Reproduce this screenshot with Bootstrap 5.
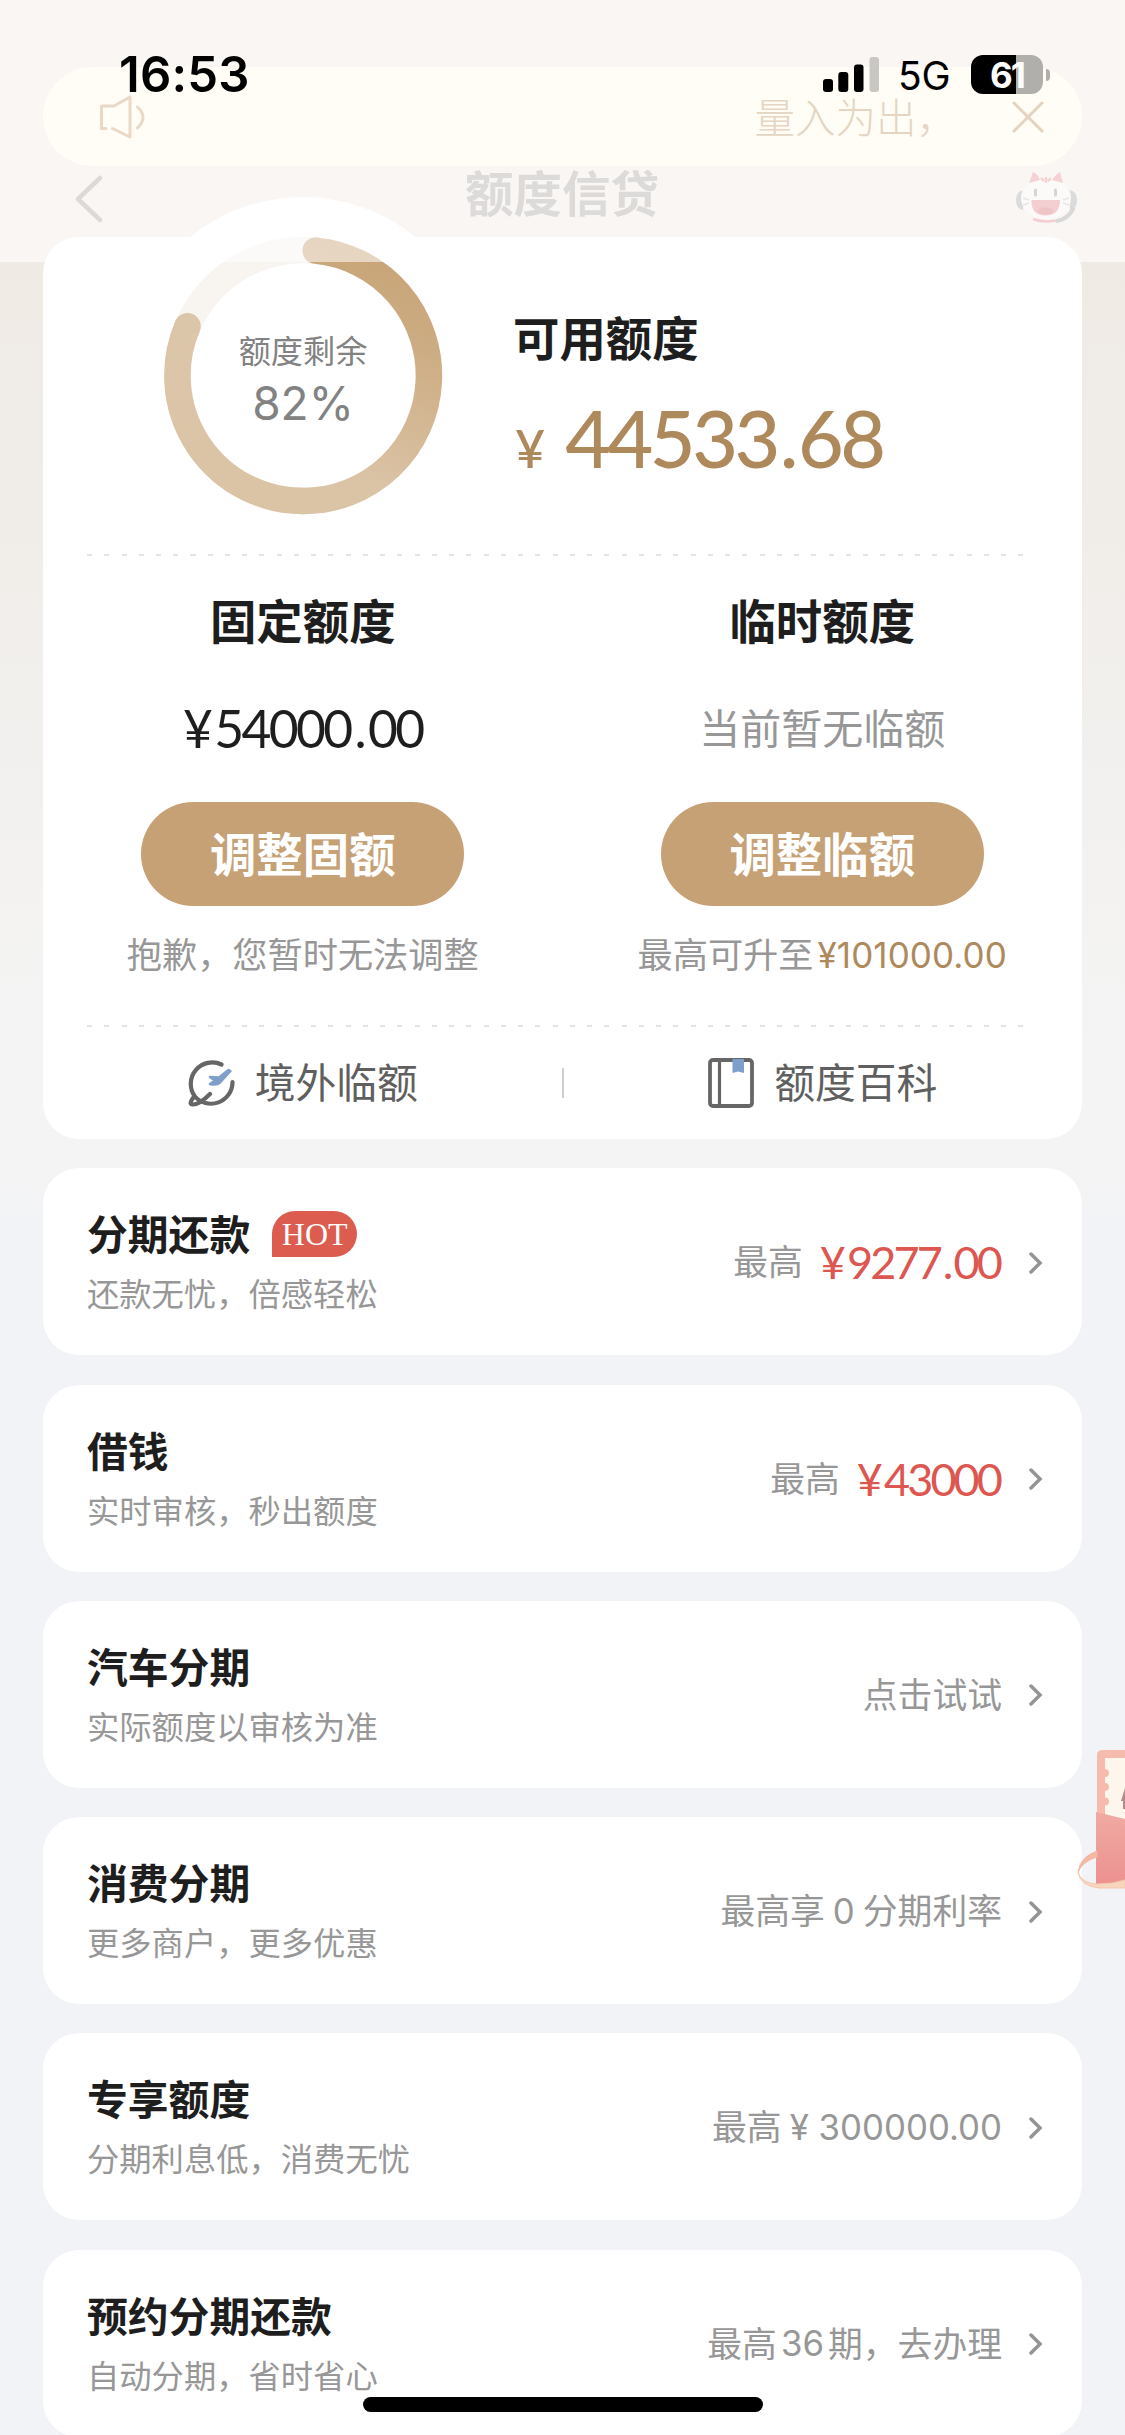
<!DOCTYPE html>
<html lang="zh-CN">
<head>
<meta charset="utf-8">
<meta name="viewport" content="width=device-width, initial-scale=1">
<title>额度信贷</title>
<link href="https://cdn.jsdelivr.net/npm/bootstrap@5.3.0/dist/css/bootstrap.min.css" rel="stylesheet">
<style>
body{font-family:"Noto Sans CJK SC",sans-serif;background:#f2f3f6;color:#1e1e1e}
.phone{width:1125px;height:2435px;padding:0 43px;background:linear-gradient(#f4ece6 0 262px,#efeae4 262px,#f4f4f4 1050px,#f4f4f4 1168px,#f2f3f6 1220px)}
.statusbar{height:104px;left:0;right:0;top:0;color:#000;z-index:5;font-family:Inter,"Liberation Sans",sans-serif}
.clock{font-size:49px;font-weight:600;line-height:60px;left:119px;top:45px;letter-spacing:.2px}
.signals{left:823px;top:55px;height:39px}
.net{font-size:39px;line-height:39px;margin-left:18px;width:55px;margin-right:18px;letter-spacing:-.2px;padding-top:2px}
.battery{width:72px;height:39px;border-radius:12px;background:linear-gradient(90deg,#000 45px,#b0afab 45px);color:#fff;font-weight:700;font-size:35px;line-height:40px;letter-spacing:-2px}
.battip{width:4px;height:12px;border-radius:0 4px 4px 0;background:#b0afab;margin-left:3px}
.notice{margin-top:67px;height:99px;border-radius:50px;background:#fffdf6;color:#e6d5c3;font-size:40.5px;font-weight:300;padding:0 38px 0 57px;z-index:3}
.notice-text{line-height:40px;margin-left:auto;margin-right:55px;margin-top:-1px}
.titlebar{height:71px;padding:5px 5px 0 32px;z-index:3}
.titlebar h1{font-size:48.5px;line-height:50px;font-weight:700;color:#dcdbda;padding-left:5px;margin:-5px 0 0}
.panel{background:#fff;border-radius:36px;margin-bottom:29.3px}
.haze{left:0;right:0;top:0;height:262px;background:rgba(255,255,255,.54);z-index:2}
.quota{height:902px}
.quota-top{height:317px}
.quota-top .avail-col{padding-top:69px}
.ring{width:356px;height:356px;margin:-40px 32px 0 82px}
.ringtext{inset:0;padding-top:132px;color:#828282;z-index:3}
.ringtext .lbl{font-size:32.2px;line-height:40px}
.ringtext .pct{font-size:46px;line-height:50px;margin-top:9px;font-family:Inter,sans-serif;font-weight:400}
.hd{font-size:46.4px;line-height:60px;font-weight:700}
.num{font-family:Lato,Inter,sans-serif}
.avail{color:#ae895c;line-height:80px;margin-top:32px;padding-left:2px}
.avail .yen{font-size:52px;margin-right:20px;font-weight:500}
.avail .big{font-size:79px;font-weight:500;letter-spacing:-3.500px}
.avail .pt{margin:0 3px}
.dash{height:2px;margin:0 54px 0 44px;background:repeating-linear-gradient(90deg,#e4e4e4 0 5px,transparent 5px 17.25px)}
.limits{height:469px;padding-top:33px}
.val{font-size:51.5px;line-height:60px;height:60px;margin-top:49px;letter-spacing:-2.600px}
.val .pt{margin:0 4px}
.val .yn{margin-right:4px}
.val.none{font-size:41px;color:#979797;letter-spacing:0;line-height:56px}
.btn-gold{--bs-btn-bg:#c6a176;--bs-btn-color:#fff;--bs-btn-hover-bg:#b99367;--bs-btn-hover-color:#fff;width:323px;height:104px;border-radius:52px;font-size:46.4px;font-weight:700;line-height:60px;border:0;margin-top:44px;padding:0 0 4px}
.tip{font-size:35.2px;line-height:40px;margin-top:27px;color:#979797}
.tip .gold{color:#ae895c;font-family:Inter,sans-serif;font-size:35px;letter-spacing:.1px;margin-left:4px}
.links{height:112px;font-size:40.8px;color:#5f5f5f}
.links span{margin:-4px 0 0 20px}
.vbar{width:2px;height:30px;background:#cfcfcf}
.item{height:187px;padding:40px 39px 0 44px}
.item h2{font-size:40.8px;line-height:50px;font-weight:700;margin:0}
.item .desc{font-size:32.3px;line-height:40px;margin-top:14px;color:#979797}
.hot{width:85px;height:46px;border-radius:23px 23px 23px 0;background:#dc5d50;color:#fff;font:32px/46px "Liberation Serif",serif;margin:0 0 0 22px;position:relative;top:1px}
.more{font-size:34.8px;line-height:50px;height:50px;color:#979797;margin-top:27px}
.more .red{color:#dd5650;font-size:45px;letter-spacing:-2.900px;margin-left:17px;margin-right:2px;padding-top:4px}
.more .red .pt{margin:0 3px}
.more .red .yn{margin-right:4px}
.more .sf{font-family:Inter,sans-serif;padding-top:3px}
.more svg{margin:5px 0 0 27px}
.gift{right:0;top:1745px;z-index:6}
.homebar{left:363px;top:2397px;width:400px;height:15px;border-radius:8px;background:#000;z-index:7}
</style>
</head>
<body>
<div class="phone position-relative overflow-hidden mx-auto d-flex flex-column">
  <div class="statusbar position-absolute">
    <div class="clock position-absolute">16:53</div>
    <div class="signals position-absolute d-flex align-items-center">
      <svg width="57" height="39" viewBox="0 0 57 39"><rect x="0" y="24" width="10" height="13" rx="3"/><rect x="15.300" y="17" width="10" height="20" rx="3"/><rect x="31" y="9.500" width="9.500" height="27.500" rx="3"/><rect x="46.500" y="2" width="9.500" height="35" rx="3" fill="#c8c7c2"/></svg>
      <span class="net">5G</span>
      <div class="battery text-center">61</div><div class="battip"></div>
    </div>
  </div>

  <div class="notice position-relative d-flex align-items-center flex-shrink-0">
    <svg width="46" height="44" viewBox="0 0 46 44" fill="none" stroke="#ead9c7" stroke-width="3" stroke-linecap="round" stroke-linejoin="round"><path d="M6 33.500H1.500V11H14L30 2V42L12.500 33.500M37.500 12Q48.500 22 37.500 33"/></svg>
    <span class="notice-text">量入为出，</span>
    <svg width="32" height="32" viewBox="0 0 32 32" fill="none" stroke="#e6d3bd" stroke-width="3" stroke-linecap="round"><path d="M2 2L30 30M30 2L2 30"/></svg>
  </div>

  <header class="titlebar position-relative d-flex justify-content-between flex-shrink-0">
    <svg class="mt-1" width="28" height="48" viewBox="0 0 28 48" fill="none" stroke="#dcdad8" stroke-width="4.500" stroke-linecap="round" stroke-linejoin="round"><path d="M25 3L3 24L25 45"/></svg>
    <h1>额度信贷</h1>
    <svg width="61" height="54" viewBox="0 0 61 54"><path d="M8 19Q0 20 0 29T7 39Z" fill="#dcdbdb"/><path d="M53 19Q61 20 61 29T54 39Z" fill="#dcdbdb"/><ellipse cx="30" cy="27" rx="25" ry="21" fill="#fcfaf9"/><path d="M13 12L17 1Q22 3 24 9ZM36 9Q40 3 44 1L47 12Z" fill="#f5d3d5"/><path d="M57 38Q52 48 41 50" fill="none" stroke="#d9d8d8" stroke-width="4" stroke-linecap="round"/><path d="M19.500 19V24M39.500 19V24" stroke="#d6d4d4" stroke-width="3" stroke-linecap="round"/><path d="M7 27L13 29M7 34L13 32M53 27L47 29M53 34L47 32" stroke="#e8e5e4" stroke-width="1.500"/><path d="M15.500 29H44Q44 44.500 29.500 44.500T15.500 29Z" fill="#f3cfd1"/><ellipse cx="29.500" cy="40" rx="8" ry="3.500" fill="#efc4c7"/><path d="M17 48Q28 52 39 49.500" fill="none" stroke="#f4cdd1" stroke-width="2.500"/><path d="M25 7L28 10M30 6V12M35 7L32 10" stroke="#f4d3d4" stroke-width="2.500"/></svg>
  </header>

  <div class="haze position-absolute"></div>

  <section class="panel quota flex-shrink-0">
    <div class="quota-top d-flex">
      <div class="ring position-relative flex-shrink-0">
        <svg width="356" height="356" viewBox="0 0 356 356">
          <defs><linearGradient id="gold" gradientUnits="userSpaceOnUse" x1="240" y1="60" x2="170" y2="260"><stop offset="0" stop-color="#c8a579"/><stop offset=".3" stop-color="#ccac82"/><stop offset="1" stop-color="#dbc3a6"/></linearGradient><linearGradient id="goldpale" gradientUnits="userSpaceOnUse" x1="0" y1="120" x2="0" y2="260"><stop offset="0" stop-color="#dcc6a9"/><stop offset="1" stop-color="#dbc3a6"/></linearGradient></defs>
          <circle cx="178" cy="178" r="178" fill="#fff"/>
          <circle cx="178" cy="178.500" r="125.500" fill="none" stroke="#f8f5f1" stroke-width="26.500"/>
          <path d="M190.700 53.600A125.500 125.500 0 0 1 178 304" fill="none" stroke="url(#gold)" stroke-width="26.500" stroke-linecap="round"/>
          <path d="M178 304A125.500 125.500 0 0 1 62.500 129.200" fill="none" stroke="url(#goldpale)" stroke-width="26.500" stroke-linecap="round"/>
        </svg>
        <div class="ringtext position-absolute text-center"><div class="lbl">额度剩余</div><div class="pct">82%</div></div>
      </div>
      <div class="avail-col">
        <div class="hd">可用额度</div>
        <div class="avail num text-nowrap"><span class="yen">¥</span><span class="big">44533<span class="pt">.</span>68</span></div>
      </div>
    </div>
    <div class="dash"></div>
    <div class="limits row g-0 text-center">
      <div class="col-6">
        <div class="hd">固定额度</div>
        <div class="val num"><span class="yn">¥</span>54000<span class="pt">.</span>00</div>
        <button class="btn btn-gold">调整固额</button>
        <div class="tip">抱歉，您暂时无法调整</div>
      </div>
      <div class="col-6">
        <div class="hd">临时额度</div>
        <div class="val none">当前暂无临额</div>
        <button class="btn btn-gold">调整临额</button>
        <div class="tip">最高可升至<span class="gold">¥101000.00</span></div>
      </div>
    </div>
    <div class="dash"></div>
    <div class="links d-flex align-items-center">
      <div class="flex-fill w-50 d-flex align-items-center justify-content-center">
        <svg width="48" height="48" viewBox="0 0 48 48" fill="none" stroke="#666" stroke-width="4.200" stroke-linecap="round" stroke-linejoin="round"><path d="M34.500 5.500A21.500 21.500 0 0 0 7.500 37Q1 45.500 5.500 45.500Q12 46 23 35M7.500 37A21.500 21.500 0 0 0 45.500 23"/><path d="M43.500 12L33 23.500Q30 26.500 23 25L28 21.500L23 18L32 18.500L41.500 11Z" fill="#7f9fcb" stroke="#7f9fcb" stroke-width="2.500"/></svg>
        <span>境外临额</span>
      </div>
      <div class="vbar"></div>
      <div class="flex-fill w-50 d-flex align-items-center justify-content-center">
        <svg width="46" height="50" viewBox="0 0 46 50" fill="none" stroke="#666" stroke-width="3.800"><rect x="2" y="2" width="42" height="46" rx="3"/><path d="M11.500 2V48" stroke-width="3.200"/><path d="M24.500 1H36V15L30 13.500L24.500 15Z" fill="#7f9fcb" stroke="none"/></svg>
        <span>额度百科</span>
      </div>
    </div>
  </section>

  <section class="panel item d-flex justify-content-between flex-shrink-0">
    <div><div class="d-flex align-items-center"><h2>分期还款</h2><span class="hot text-center">HOT</span></div><div class="desc">还款无忧，倍感轻松</div></div>
    <div class="more d-flex align-items-center align-self-start">最高<span class="red num"><span class="yn">¥</span>9277<span class="pt">.</span>00</span><svg width="14" height="22" viewBox="0 0 14 22" fill="none" stroke="#949494" stroke-width="3.500" stroke-linecap="round"><path d="M2 2L11 11L2 20"/></svg></div>
  </section>
  <section class="panel item d-flex justify-content-between flex-shrink-0">
    <div><h2>借钱</h2><div class="desc">实时审核，秒出额度</div></div>
    <div class="more d-flex align-items-center align-self-start">最高<span class="red num"><span class="yn">¥</span>43000</span><svg width="14" height="22" viewBox="0 0 14 22" fill="none" stroke="#949494" stroke-width="3.500" stroke-linecap="round"><path d="M2 2L11 11L2 20"/></svg></div>
  </section>
  <section class="panel item d-flex justify-content-between flex-shrink-0">
    <div><h2>汽车分期</h2><div class="desc">实际额度以审核为准</div></div>
    <div class="more d-flex align-items-center align-self-start">点击试试<svg width="14" height="22" viewBox="0 0 14 22" fill="none" stroke="#949494" stroke-width="3.500" stroke-linecap="round"><path d="M2 2L11 11L2 20"/></svg></div>
  </section>
  <section class="panel item d-flex justify-content-between flex-shrink-0">
    <div><h2>消费分期</h2><div class="desc">更多商户，更多优惠</div></div>
    <div class="more d-flex align-items-center align-self-start">最高享<span class="sf mx-1 px-1">0</span>分期利率<svg width="14" height="22" viewBox="0 0 14 22" fill="none" stroke="#949494" stroke-width="3.500" stroke-linecap="round"><path d="M2 2L11 11L2 20"/></svg></div>
  </section>
  <section class="panel item d-flex justify-content-between flex-shrink-0">
    <div><h2>专享额度</h2><div class="desc">分期利息低，消费无忧</div></div>
    <div class="more d-flex align-items-center align-self-start">最高<span class="sf ms-2">¥ 300000.00</span><svg width="14" height="22" viewBox="0 0 14 22" fill="none" stroke="#949494" stroke-width="3.500" stroke-linecap="round"><path d="M2 2L11 11L2 20"/></svg></div>
  </section>
  <section class="panel item d-flex justify-content-between flex-shrink-0">
    <div><h2>预约分期还款</h2><div class="desc">自动分期，省时省心</div></div>
    <div class="more d-flex align-items-center align-self-start">最高<span class="sf mx-1">36</span>期，去办理<svg width="14" height="22" viewBox="0 0 14 22" fill="none" stroke="#949494" stroke-width="3.500" stroke-linecap="round"><path d="M2 2L11 11L2 20"/></svg></div>
  </section>

  <svg class="gift position-absolute" width="50" height="150" viewBox="0 0 50 150">
    <defs><linearGradient id="pk" x1="0" y1="0" x2="0" y2="1"><stop offset="0" stop-color="#f0aaa2"/><stop offset="1" stop-color="#ec918f"/></linearGradient></defs>
    <path d="M22 140V10Q22 5 28 5H50V140Z" fill="#f5bbac"/>
    <path d="M30 13H50V80L30 70Z" fill="#fcf6ec"/>
    <circle cx="30" cy="28" r="4" fill="#f5bbac"/><circle cx="30" cy="42" r="4" fill="#f5bbac"/><circle cx="30" cy="56.500" r="4" fill="#f5bbac"/>
    <path d="M46 56L50 43V64H48V56Z" fill="#b88a85"/>
    <path d="M21 67L50 74V140H21Z" fill="url(#pk)"/>
    <path d="M22 106Q5 112 3 127Q8 116 22 112Z" fill="#f4b8a4" stroke="#f4b8a4" stroke-width="1"/>
    <path d="M3 127Q6 138 22 139Q38 139 50 135V143Q36 143 24 143Q5 141 3 127Z" fill="#f7d6bf" stroke="#f5c9ae" stroke-width="1"/>
  </svg>
  <div class="homebar position-absolute"></div>
</div>
<script src="https://cdn.jsdelivr.net/npm/bootstrap@5.3.0/dist/js/bootstrap.bundle.min.js"></script>
</body>
</html>
